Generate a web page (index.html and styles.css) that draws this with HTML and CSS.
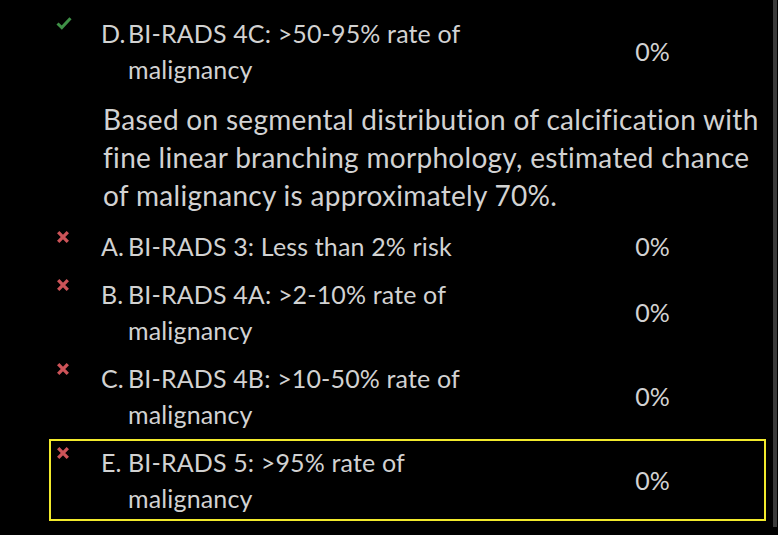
FILE: index.html
```html
<!DOCTYPE html>
<html>
<head>
<meta charset="utf-8">
<link rel="stylesheet" href="styles.css">
</head>
<body>
<div class="page">
  <div class="list">
    <div class="row">
      <span class="mark ok"><svg viewBox="0 0 16 14" width="16" height="14"><path d="M1.5 7.5 L5.8 11.6 L14.5 2.2" fill="none" stroke="#3f9147" stroke-width="3"/></svg></span>
      <div class="opt"><span class="key">D.</span><span class="txt">BI-RADS 4C: &gt;50-95% rate of malignancy</span></div>
      <div class="pct">0%</div>
    </div>
    <p class="note">Based on segmental distribution of calcification with fine linear branching morphology, estimated chance of malignancy is approximately 70%.</p>
    <div class="row">
      <span class="mark bad"><svg viewBox="0 0 14 14" width="14" height="14"><path d="M2.2 2.2 L11.8 11.8 M11.8 2.2 L2.2 11.8" stroke="#cc5358" stroke-width="3.3"/></svg></span>
      <div class="opt"><span class="key">A.</span><span class="txt">BI-RADS 3: Less than 2% risk</span></div>
      <div class="pct">0%</div>
    </div>
    <div class="row">
      <span class="mark bad"><svg viewBox="0 0 14 14" width="14" height="14"><path d="M2.2 2.2 L11.8 11.8 M11.8 2.2 L2.2 11.8" stroke="#cc5358" stroke-width="3.3"/></svg></span>
      <div class="opt"><span class="key">B.</span><span class="txt">BI-RADS 4A: &gt;2-10% rate of malignancy</span></div>
      <div class="pct">0%</div>
    </div>
    <div class="row">
      <span class="mark bad"><svg viewBox="0 0 14 14" width="14" height="14"><path d="M2.2 2.2 L11.8 11.8 M11.8 2.2 L2.2 11.8" stroke="#cc5358" stroke-width="3.3"/></svg></span>
      <div class="opt"><span class="key">C.</span><span class="txt">BI-RADS 4B: &gt;10-50% rate of malignancy</span></div>
      <div class="pct">0%</div>
    </div>
    <div class="row selected">
      <span class="mark bad"><svg viewBox="0 0 14 14" width="14" height="14"><path d="M2.2 2.2 L11.8 11.8 M11.8 2.2 L2.2 11.8" stroke="#cc5358" stroke-width="3.3"/></svg></span>
      <div class="opt"><span class="key">E.</span><span class="txt">BI-RADS 5: &gt;95% rate of malignancy</span></div>
      <div class="pct">0%</div>
    </div>
  </div>
  <div class="scrollbar"></div>
</div>
</body>
</html>
```
FILE: styles.css
```css
html, body {
  margin: 0;
  padding: 0;
  background: #000;
}
body {
  font-family: "Lato", "Liberation Sans", sans-serif;
  color: #d2d2d2;
  font-size: 25px;
}
.page {
  display: flex;
  height: 535px;
  overflow: hidden;
}
.list {
  flex: 1;
  padding: 10px 7px 0 49px;
}
.row {
  display: flex;
  align-items: center;
  border: 2px solid transparent;
  padding: 3px 0;
  margin-bottom: 2px;
}
.row.selected {
  border-color: #f2ea2c;
}
.mark {
  align-self: flex-start;
  width: 50px;
  padding-left: 5px;
  box-sizing: border-box;
  display: flex;
  padding-top: 1px;
}
.mark.bad {
  padding-left: 5px;
  padding-top: 2px;
}
.opt {
  display: flex;
  width: 490px;
  line-height: 36px;
  letter-spacing: 0.15px;
}
.key {
  width: 27px;
  flex: none;
}
.txt {
  width: 340px;
}
.pct {
  flex: 1;
  text-align: center;
  line-height: 36px;
  padding-right: 50px;
}
.note {
  margin: 8px 0 9px 54px;
  line-height: 38px;
  font-size: 28px;
  letter-spacing: 0.3px;
}
.scrollbar {
  width: 4px;
  margin-right: 1px;
  height: 527px;
  background: #3b3b3b;
}
```
